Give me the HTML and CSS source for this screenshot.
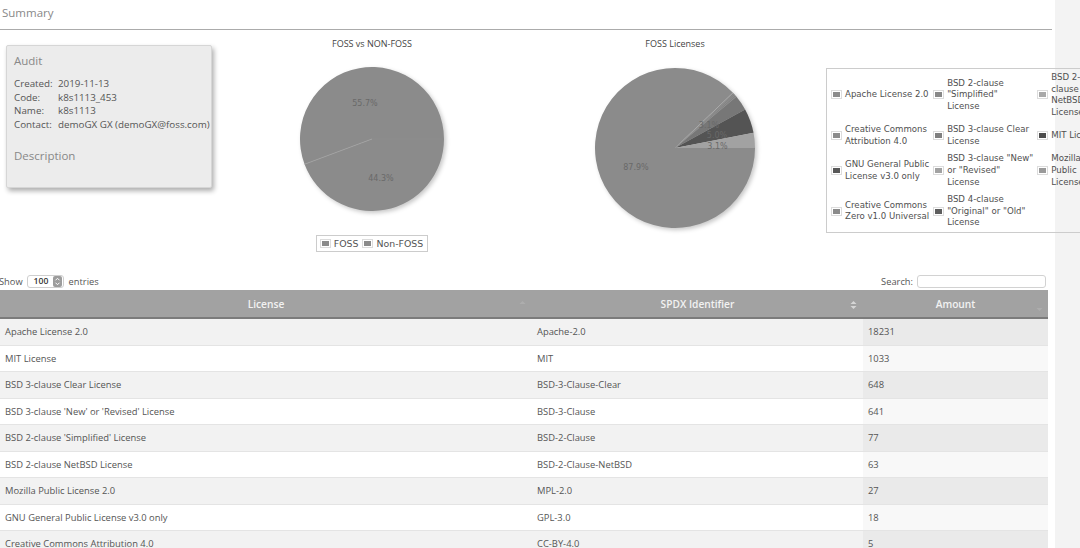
FILE: index.html
```html
<!DOCTYPE html>
<html lang="en">
<head>
<meta charset="utf-8">
<title>Summary</title>
<link rel="stylesheet" href="styles.css">
</head>
<body>
<div class="page">
  <h1 class="page-title">Summary</h1>

  <div class="top-row">
    <div class="audit-card">
      <h2 class="card-title">Audit</h2>
      <dl class="audit-list">
        <div class="audit-row"><dt>Created:</dt><dd>2019-11-13</dd></div>
        <div class="audit-row"><dt>Code:</dt><dd>k8s1113_453</dd></div>
        <div class="audit-row"><dt>Name:</dt><dd>k8s1113</dd></div>
        <div class="audit-row"><dt>Contact:</dt><dd>demoGX GX (demoGX@foss.com)</dd></div>
      </dl>
      <h2 class="card-title desc-title">Description</h2>
    </div>

    <div class="chart chart-foss">
      <div class="chart-title">FOSS vs NON-FOSS</div>
      <svg class="pie" width="180" height="172" viewBox="0 0 180 172">
        <g class="pie-body">
          <path d="M90,84 L162,84 A72,72 0 0 1 22.57,109.24 Z" fill="#8b8b8b"/>
          <path d="M90,84 L22.57,109.24 A72,72 0 1 1 162,84 Z" fill="#8b8b8b"/>
        </g>
        <line x1="90" y1="84" x2="22.57" y2="109.24" stroke="#a3a3a3" stroke-width="0.8"/>
        <line x1="90" y1="84" x2="162" y2="84" stroke="#929292" stroke-width="0.5"/>
        <text class="pie-label" x="83" y="48">55.7%</text>
        <text class="pie-label" x="99" y="123">44.3%</text>
      </svg>
      <div class="pie-legend">
        <span class="swatch"><span class="swatch-fill c-mid"></span></span><span class="pie-legend-label">FOSS</span>
        <span class="swatch"><span class="swatch-fill c-mid"></span></span><span class="pie-legend-label">Non-FOSS</span>
      </div>
    </div>

    <div class="chart chart-licenses">
      <div class="chart-title">FOSS Licenses</div>
      <svg class="pie" width="180" height="182" viewBox="0 0 180 182">
        <g class="pie-body">
          <path d="M90,93 L170,93 A80,80 0 1 1 147.96,37.86 Z" fill="#8b8b8b"/>
          <path d="M90,93 L147.96,37.86 A80,80 0 0 1 151.28,41.58 Z" fill="#828282"/>
          <path d="M90,93 L151.28,41.58 A80,80 0 0 1 160.10,54.46 Z" fill="#777777"/>
          <path d="M90,93 L160.10,54.46 A80,80 0 0 1 168.53,77.74 Z" fill="#545454"/>
          <path d="M90,93 L168.53,77.74 A80,80 0 0 1 170,93 Z" fill="#a2a2a2"/>
        </g>
        <line x1="90" y1="93" x2="147.96" y2="37.86" stroke="#b0b0b0" stroke-width="0.8"/>
        <line x1="90" y1="93" x2="148.98" y2="38.95" stroke="#9a9a9a" stroke-width="0.5"/>
        <line x1="90" y1="93" x2="150.0" y2="40.1" stroke="#9a9a9a" stroke-width="0.5"/>
        <line x1="90" y1="93" x2="151.28" y2="41.58" stroke="#8e8e8e" stroke-width="0.5"/>
        <text class="pie-label" x="51" y="112">87.9%</text>
        <text class="pie-label" x="124" y="70">3.1%</text>
        <text class="pie-label" x="132" y="80">5.0%</text>
        <text class="pie-label" x="132.5" y="91">3.1%</text>
      </svg>
    </div>

    <div class="legend-box">
      <table class="legend">
        <tr>
          <td class="lg-sw"><span class="swatch"><span class="swatch-fill c-mid"></span></span></td>
          <td class="lg-label">Apache License 2.0</td>
          <td class="lg-sw"><span class="swatch"><span class="swatch-fill c-mid2"></span></span></td>
          <td class="lg-label">BSD 2-clause<br>"Simplified"<br>License</td>
          <td class="lg-sw lg-sw3"><span class="swatch"><span class="swatch-fill c-light"></span></span></td>
          <td class="lg-label">BSD 2-<br>clause<br>NetBSD<br>License</td>
        </tr>
        <tr>
          <td class="lg-sw"><span class="swatch"><span class="swatch-fill c-mid"></span></span></td>
          <td class="lg-label">Creative Commons<br>Attribution 4.0</td>
          <td class="lg-sw"><span class="swatch"><span class="swatch-fill c-mid3"></span></span></td>
          <td class="lg-label">BSD 3-clause Clear<br>License</td>
          <td class="lg-sw lg-sw3"><span class="swatch"><span class="swatch-fill c-dark"></span></span></td>
          <td class="lg-label">MIT License</td>
        </tr>
        <tr>
          <td class="lg-sw"><span class="swatch"><span class="swatch-fill c-dark2"></span></span></td>
          <td class="lg-label">GNU General Public<br>License v3.0 only</td>
          <td class="lg-sw"><span class="swatch"><span class="swatch-fill c-light2"></span></span></td>
          <td class="lg-label">BSD 3-clause "New"<br>or "Revised"<br>License</td>
          <td class="lg-sw lg-sw3"><span class="swatch"><span class="swatch-fill c-light3"></span></span></td>
          <td class="lg-label">Mozilla<br>Public<br>License 2.0</td>
        </tr>
        <tr>
          <td class="lg-sw"><span class="swatch"><span class="swatch-fill c-mid"></span></span></td>
          <td class="lg-label">Creative Commons<br>Zero v1.0 Universal</td>
          <td class="lg-sw"><span class="swatch"><span class="swatch-fill c-dark3"></span></span></td>
          <td class="lg-label">BSD 4-clause<br>"Original" or "Old"<br>License</td>
          <td class="lg-sw lg-sw3"></td>
          <td class="lg-label"></td>
        </tr>
      </table>
    </div>
  </div>

  <div class="table-controls">
    <label class="length-control">Show
      <span class="select-box"><span class="select-value">100</span>
        <svg class="select-spin" width="9" height="11" viewBox="0 0 9 11">
          <rect x="0" y="0" width="9" height="11" rx="2" fill="#9c9c9c"/>
          <path d="M2.5,4.3 L4.5,2.3 L6.5,4.3" fill="none" stroke="#fff" stroke-width="1"/>
          <path d="M2.5,6.7 L4.5,8.7 L6.5,6.7" fill="none" stroke="#fff" stroke-width="1"/>
        </svg>
      </span>
      entries</label>
    <label class="search-control">Search: <span class="search-input"></span></label>
  </div>

  <table class="data-table">
    <colgroup>
      <col class="col-license">
      <col class="col-spdx">
      <col class="col-amount">
    </colgroup>
    <thead>
      <tr>
        <th>License
          <svg class="sort-icon" width="7" height="10" viewBox="0 0 7 10"><path d="M0.5,4 L3.5,1 L6.5,4 Z" fill="#adadad"/></svg>
        </th>
        <th>SPDX Identifier
          <svg class="sort-icon" width="7" height="10" viewBox="0 0 7 10"><path d="M0.5,4 L3.5,1 L6.5,4 Z M0.5,6 L3.5,9 L6.5,6 Z" fill="#d6d6d6"/></svg>
        </th>
        <th>Amount
          <svg class="sort-icon sort-down" width="7" height="10" viewBox="0 0 7 10"><path d="M0.5,6 L3.5,9 L6.5,6 Z" fill="#adadad"/></svg>
        </th>
      </tr>
    </thead>
    <tbody>
      <tr><td>Apache License 2.0</td><td>Apache-2.0</td><td class="sorted">18231</td></tr>
      <tr><td>MIT License</td><td>MIT</td><td class="sorted">1033</td></tr>
      <tr><td>BSD 3-clause Clear License</td><td>BSD-3-Clause-Clear</td><td class="sorted">648</td></tr>
      <tr><td>BSD 3-clause 'New' or 'Revised' License</td><td>BSD-3-Clause</td><td class="sorted">641</td></tr>
      <tr><td>BSD 2-clause 'Simplified' License</td><td>BSD-2-Clause</td><td class="sorted">77</td></tr>
      <tr><td>BSD 2-clause NetBSD License</td><td>BSD-2-Clause-NetBSD</td><td class="sorted">63</td></tr>
      <tr><td>Mozilla Public License 2.0</td><td>MPL-2.0</td><td class="sorted">27</td></tr>
      <tr><td>GNU General Public License v3.0 only</td><td>GPL-3.0</td><td class="sorted">18</td></tr>
      <tr><td>Creative Commons Attribution 4.0</td><td>CC-BY-4.0</td><td class="sorted">5</td></tr>
      <tr><td>Creative Commons Zero v1.0 Universal</td><td>CC0-1.0</td><td class="sorted">2</td></tr>
      <tr><td>BSD 4-clause 'Original' or 'Old' License</td><td>BSD-4-Clause</td><td class="sorted">1</td></tr>
    </tbody>
  </table>
</div>
</body>
</html>
```

FILE: styles.css
```css
html, body {
  margin: 0;
  padding: 0;
  overflow: hidden;
}

body {
  background: #f3f3f3;
  font-family: "Open Sans", "Liberation Sans", sans-serif;
  color: #555;
}

.page {
  width: 1055px;
  min-height: 548px;
  background: #fff;
}

.page-title {
  margin: 0 3px 0 0;
  padding: 0 0 0 2px;
  height: 29px;
  line-height: 26px;
  font-size: 11.5px;
  font-weight: 400;
  color: #888;
  border-bottom: 1px solid #ababab;
}

/* ---------- top row ---------- */
.top-row {
  display: flex;
  align-items: flex-start;
  height: 240px;
}

.audit-card {
  flex: none;
  box-sizing: border-box;
  width: 206px;
  height: 143px;
  margin: 15px 0 0 6px;
  padding: 7px 7px;
  background: #ececec;
  border: 1px solid #d6d6d6;
  border-radius: 2px;
  box-shadow: 2px 3px 5px rgba(0, 0, 0, 0.32);
}

.card-title {
  margin: 0;
  font-size: 11.5px;
  font-weight: 400;
  line-height: 16px;
  color: #888;
}

.desc-title {
  margin-top: 17px;
}

.audit-list {
  margin: 8.4px 0 0;
  font-size: 9.8px;
  line-height: 13.4px;
  color: #555;
}

.audit-row {
  display: flex;
}

.audit-row dt {
  width: 44px;
  flex: none;
}

.audit-row dd {
  margin: 0;
  white-space: nowrap;
}

/* ---------- charts ---------- */
.chart {
  flex: none;
  width: 180px;
  display: flex;
  flex-direction: column;
  align-items: center;
}

.chart-foss {
  margin-left: 70px;
}

.chart-licenses {
  margin-left: 123px;
}

.chart-title {
  margin-top: 8px;
  font-size: 9px;
  line-height: 11px;
  color: #444;
}

.pie {
  display: block;
  margin-top: 6px;
  overflow: visible;
}

.pie-body {
  filter: drop-shadow(2px 2px 2px rgba(0, 0, 0, 0.22));
}

.pie-label {
  font-family: "DejaVu Sans", sans-serif;
  font-size: 8px;
  fill: #696969;
  text-anchor: middle;
  dominant-baseline: central;
}

.pie-legend {
  display: flex;
  align-items: center;
  margin-top: 8px;
  padding: 1px 3px;
  border: 1px solid #cccccc;
  font-family: "DejaVu Sans", sans-serif;
  font-size: 9.4px;
  line-height: 13px;
  color: #545454;
}

.pie-legend-label {
  margin: 0 4px 0 3px;
}

.pie-legend-label:last-child {
  margin-right: 1px;
}

.swatch {
  display: inline-block;
  padding: 1px;
  border: 1px solid #dcdcdc;
  vertical-align: middle;
}

.swatch-fill {
  display: block;
  width: 7px;
  height: 5px;
}

.c-mid { background: #8b8b8b; }
.c-mid2 { background: #888888; }
.c-mid3 { background: #7f7f7f; }
.c-light { background: #a8a8a8; }
.c-light2 { background: #a2a2a2; }
.c-light3 { background: #9a9a9a; }
.c-dark { background: #4d4d4d; }
.c-dark2 { background: #585858; }
.c-dark3 { background: #5e5e5e; }

/* ---------- big legend ---------- */
.legend-box {
  flex: none;
  margin: 38px 0 0 61px;
  border: 1px solid #cccccc;
}

.legend {
  border-collapse: collapse;
  font-family: "DejaVu Sans", sans-serif;
  font-size: 8.6px;
  line-height: 11.7px;
  color: #4f4f4f;
}

.lg-sw {
  padding: 0 3px 0 4px;
  vertical-align: middle;
}

.lg-sw3 {
  padding-left: 4px;
}

.lg-label {
  padding: 2.8px 0;
  white-space: nowrap;
  vertical-align: middle;
}

/* ---------- table controls ---------- */
.table-controls {
  display: flex;
  justify-content: space-between;
  align-items: center;
  box-sizing: border-box;
  height: 20px;
  padding-top: 2px;
  margin: 0 9px 0 -1px;
  font-size: 9.3px;
  color: #555;
}

.length-control,
.search-control {
  display: flex;
  align-items: center;
}

.select-box {
  display: inline-flex;
  align-items: center;
  justify-content: space-between;
  box-sizing: border-box;
  width: 37px;
  height: 13px;
  margin: 0 5px 0 4px;
  padding: 0 1px 0 6px;
  border: 1px solid #cfcfcf;
  border-radius: 3px;
  background: #fff;
}

.select-value {
  font-size: 8.6px;
  font-weight: 600;
  color: #333;
  line-height: 11px;
}

.select-spin {
  display: block;
}

.search-input {
  display: inline-block;
  box-sizing: border-box;
  width: 129px;
  height: 13px;
  margin-left: 4px;
  border: 1px solid #d2d2d2;
  border-radius: 3px;
  background: #fff;
}

/* ---------- data table ---------- */
.data-table {
  width: 1048px;
  border-collapse: separate;
  border-spacing: 0;
  table-layout: fixed;
  font-size: 9.4px;
  color: #555;
}

.col-license { width: 532px; }
.col-spdx { width: 331px; }
.col-amount { width: 185px; }

.data-table th {
  position: relative;
  padding: 2px 0 0;
  line-height: 25px;
  background: #a2a2a2;
  color: #f2f2f2;
  font-size: 10.2px;
  font-weight: 600;
  text-align: center;
  border-bottom: 2px solid #7b7b7b;
}

.sort-icon {
  position: absolute;
  right: 6px;
  top: 10px;
}

.sort-down {
  top: 12px;
  right: 5px;
}

.data-table td {
  padding: 0 0 0 5px;
  line-height: 25.5px;
  border-bottom: 1px solid #e4e4e4;
  white-space: nowrap;
  overflow: hidden;
}

.data-table tbody tr:nth-child(odd) td {
  background: #f2f2f2;
}

.data-table tbody tr:nth-child(even) td {
  background: #ffffff;
}

.data-table tbody tr:nth-child(odd) td.sorted {
  background: #eaeaea;
}

.data-table tbody tr:nth-child(even) td.sorted {
  background: #f8f8f8;
}
```
